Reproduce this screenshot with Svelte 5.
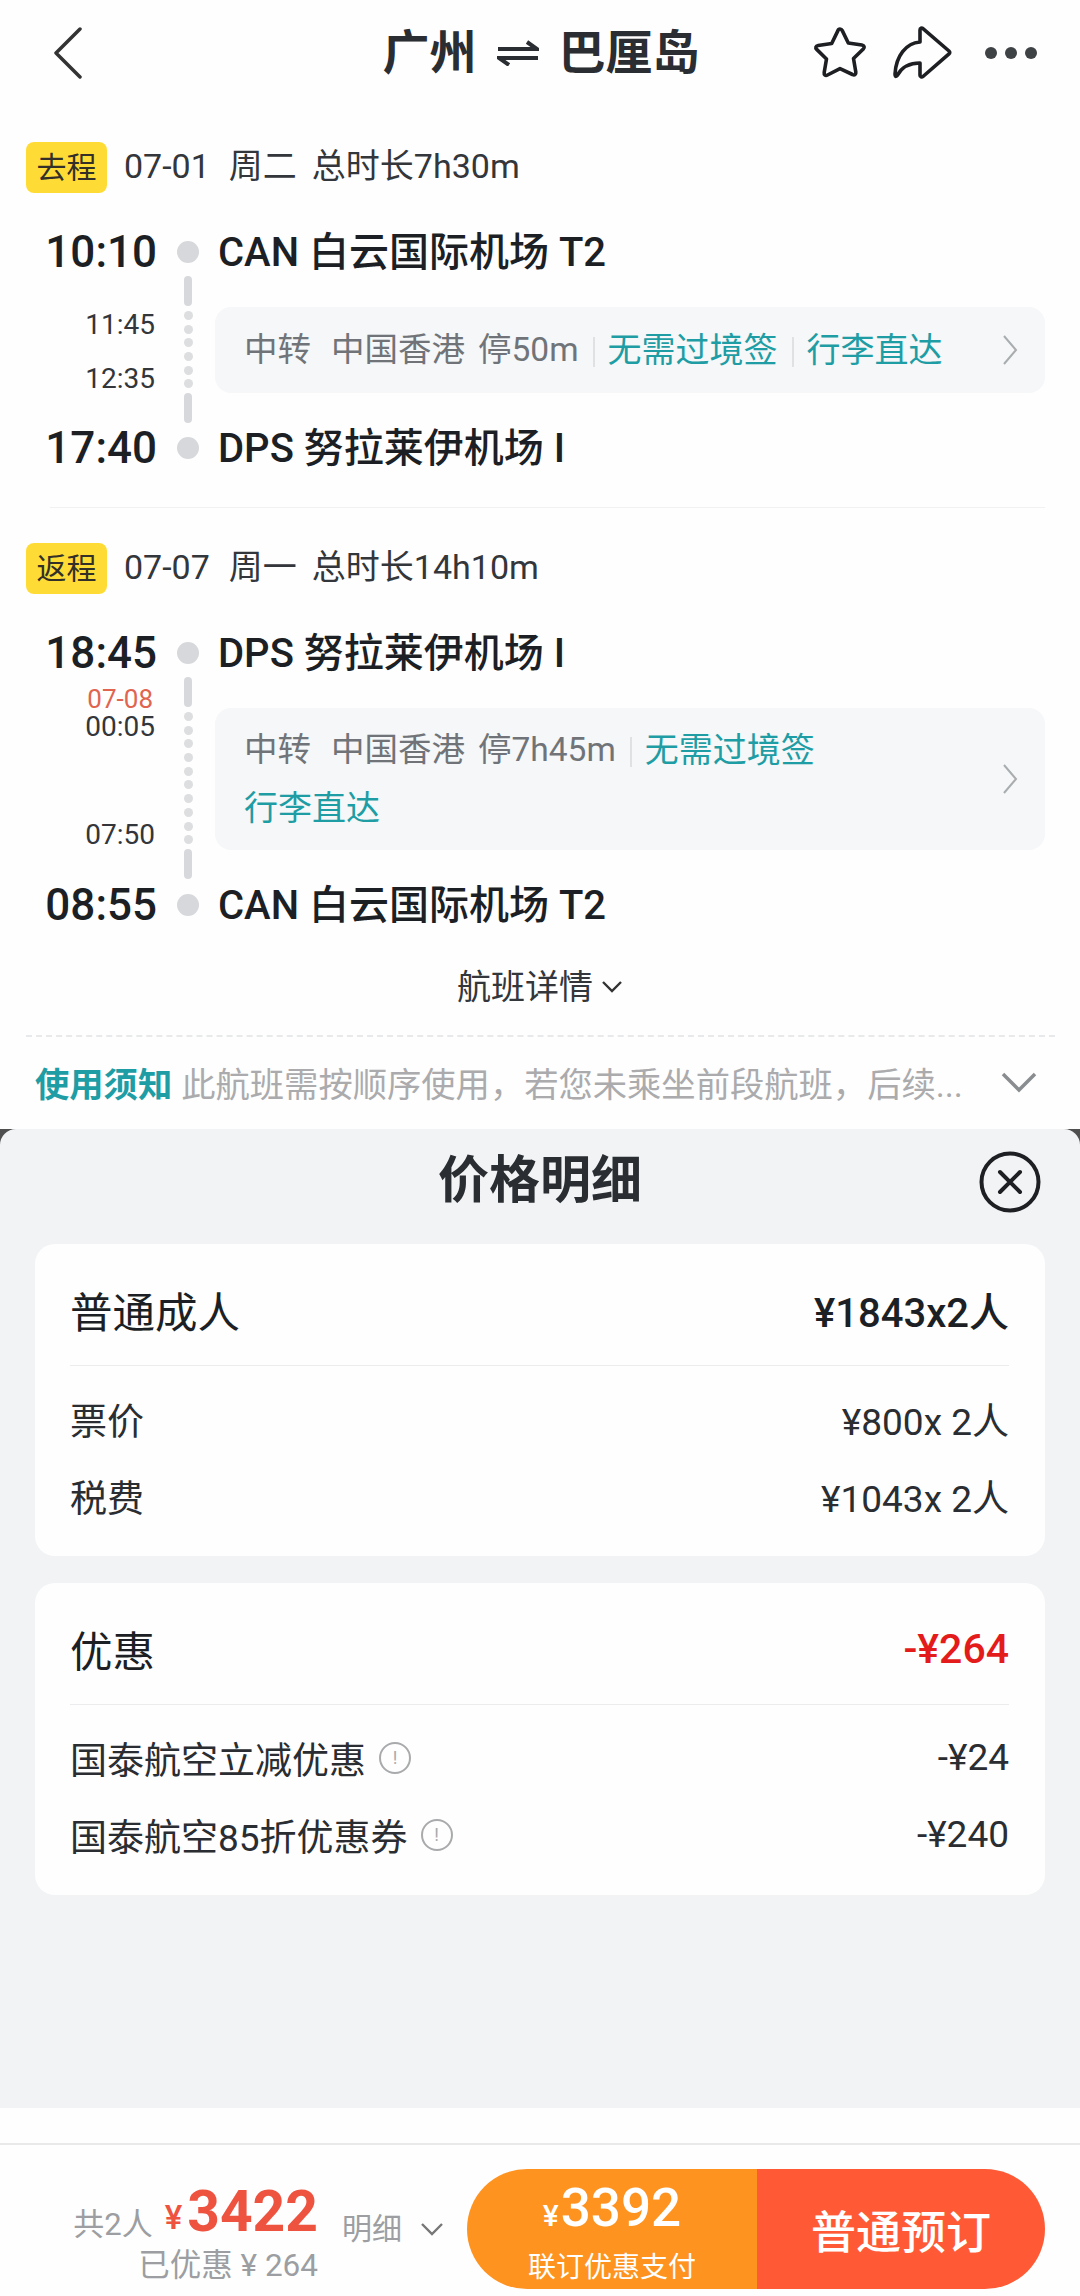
<script lang="ts">
  const trips = [
    {
      tag: '去程',
      date: '07-01',
      week: '周二',
      total: '总时长7h30m',
      from: { time: '10:10', place: 'CAN 白云国际机场 T2' },
      to: { time: '17:40', place: 'DPS 努拉莱伊机场 I' },
      arrive: '11:45',
      leave: '12:35',
      nextDay: '',
      stay: '停50m',
      dots: 6,
    },
    {
      tag: '返程',
      date: '07-07',
      week: '周一',
      total: '总时长14h10m',
      from: { time: '18:45', place: 'DPS 努拉莱伊机场 I' },
      to: { time: '08:55', place: 'CAN 白云国际机场 T2' },
      arrive: '00:05',
      leave: '07:50',
      nextDay: '07-08',
      stay: '停7h45m',
      dots: 10,
    },
  ];

  const fares = [
    { label: '票价', value: '¥800x 2人' },
    { label: '税费', value: '¥1043x 2人' },
  ];

  const discounts = [
    { label: '国泰航空立减优惠', value: '-¥24' },
    { label: '国泰航空85折优惠券', value: '-¥240' },
  ];
</script>

{#snippet stop(s: { time: string; place: string })}
  <div class="stop">
    <span class="stop-time">{s.time}</span>
    <span class="stop-dot"></span>
    <span class="stop-place">{s.place}</span>
  </div>
{/snippet}

<div class="page">
  <header class="topbar">
    <svg class="back" width="30" height="52" viewBox="0 0 30 52">
      <path d="M27 2 3 26l24 24" fill="none" stroke="#333" stroke-width="3.5" stroke-linecap="round" stroke-linejoin="round" />
    </svg>
    <h1 class="route">
      <span>广州</span>
      <svg width="42" height="26" viewBox="0 0 42 26">
        <path d="M1 9h39L30 2" fill="none" stroke="#2a2d31" stroke-width="4" />
        <path d="M41 18H2l10 7" fill="none" stroke="#2a2d31" stroke-width="4" />
      </svg>
      <span>巴厘岛</span>
    </h1>
    <div class="actions">
      <svg width="56" height="54" viewBox="0 0 56 54">
        <path d="M28 3c1 0 1.800.6 2.300 1.600l6 12.400 13.600 2c2.400.4 3 2.300 1.400 3.900l-9.800 9.600 2.300 13.500c.4 2.400-1.300 3.600-3.300 2.500L28 42.600 15.500 49c-2 1.100-3.700-.1-3.300-2.500l2.300-13.500-9.800-9.600c-1.600-1.600-1-3.500 1.400-3.900l13.600-2 6-12.400C26.200 3.600 27 3 28 3Z" fill="none" stroke="#1d1f22" stroke-width="3.600" stroke-linejoin="round" />
      </svg>
      <svg width="60" height="54" viewBox="0 0 60 54">
        <path d="M27 4c0-1.800 1.800-2.300 3-1.300l26 22.300c1 .9 1 2 0 2.900L30 50.500c-1.200 1-3 .5-3-1.300V37c-11 0-18 4-22.500 12C2.400 51.500 2 50 2 48 3 30 13 17 27 16Z" fill="none" stroke="#1d1f22" stroke-width="3.600" stroke-linejoin="round" />
      </svg>
      <div class="more"><i></i><i></i><i></i></div>
    </div>
  </header>

  <main class="itinerary">
    {#each trips as trip, i}
      {#if i > 0}<div class="trip-divider"></div>{/if}
      <section class="trip">
        <div class="trip-head">
          <span class="tag">{trip.tag}</span>
          <span class="date">{trip.date}</span>
          <span class="date week">{trip.week}</span>
          <span class="date">{trip.total}</span>
        </div>

        {@render stop(trip.from)}

        <div class="transfer">
          <div class="times" class:overnight={trip.nextDay}>
            {#if trip.nextDay}<span class="next-day">{trip.nextDay}</span>{/if}
            <span class="time">{trip.arrive}</span>
            <span class="time">{trip.leave}</span>
          </div>
          <div class="track">
            <span class="dash"></span>
            <div class="dots">
              {#each Array(trip.dots) as _}<i></i>{/each}
            </div>
            <span class="dash"></span>
          </div>
          <div class="transfer-box">
            <div class="transfer-info" class:wrapped={trip.nextDay}>
              <span class="muted">中转<b class="city">中国香港</b><b class="stay">{trip.stay}</b></span>
              <span class="perk">无需过境签</span>
              <span class="perk">行李直达</span>
            </div>
            <svg class="box-arrow" width="16" height="32" viewBox="0 0 16 32">
              <path d="M2 2l12 14L2 30" fill="none" stroke="#a9adb0" stroke-width="2" />
            </svg>
          </div>
        </div>

        {@render stop(trip.to)}
      </section>
    {/each}

    <div class="details-link">
      航班详情
      <svg width="22" height="14" viewBox="0 0 22 14">
        <path d="M2 2l9 9 9-9" fill="none" stroke="#333" stroke-width="2.400" />
      </svg>
    </div>

    <div class="notice">
      <span class="notice-title">使用须知</span>
      <span class="notice-text">此航班需按顺序使用，若您未乘坐前段航班，后续...</span>
      <svg width="36" height="22" viewBox="0 0 36 22">
        <path d="M2 3l16 16L34 3" fill="none" stroke="#8a8d90" stroke-width="3.500" />
      </svg>
    </div>
  </main>

  <div class="sheet-wrap">
    <section class="sheet">
      <div class="sheet-head">
        <h2>价格明细</h2>
        <svg class="close" width="62" height="62" viewBox="0 0 62 62">
          <circle cx="31" cy="31" r="28.500" fill="none" stroke="#1d1f22" stroke-width="4" />
          <path d="M21 21l20 20M41 21 21 41" fill="none" stroke="#1d1f22" stroke-width="4" stroke-linecap="round" />
        </svg>
      </div>

      <div class="card">
        <div class="card-head">
          <span>普通成人</span>
          <strong>¥1843x2人</strong>
        </div>
        {#each fares as row}
          <div class="card-row">
            <span>{row.label}</span>
            <span>{row.value}</span>
          </div>
        {/each}
      </div>

      <div class="card">
        <div class="card-head">
          <span>优惠</span>
          <strong class="red">-¥264</strong>
        </div>
        {#each discounts as row}
          <div class="card-row">
            <span class="with-info">
              {row.label}
              <span class="info">!</span>
            </span>
            <span>{row.value}</span>
          </div>
        {/each}
      </div>
    </section>
  </div>

  <footer class="footer">
    <div class="summary">
      <div class="price">
        <div class="price-main">
          <span class="people">共2人</span>
          <span class="yen">¥</span>
          <span class="amount">3422</span>
        </div>
        <div class="saved">已优惠 ¥ 264</div>
      </div>
      <div class="breakdown">
        明细
        <svg width="24" height="14" viewBox="0 0 24 14">
          <path d="M2 2l10 10L22 2" fill="none" stroke="#777" stroke-width="2.400" />
        </svg>
      </div>
    </div>
    <div class="buttons">
      <div class="btn-combo">
        <div class="combo-price"><small>¥</small>3392</div>
        <div class="combo-label">联订优惠支付</div>
      </div>
      <div class="btn-plain">普通预订</div>
    </div>
  </footer>
</div>

<style>
  :global(body) {
    margin: 0;
    background: #fefefe;
  }

  .page {
    width: 1080px;
    height: 2296px;
    display: flex;
    flex-direction: column;
    overflow: hidden;
    background: #fefefe;
    color: #1c1f24;
    font-family: Roboto, 'Noto Sans CJK SC', sans-serif;
  }

  .topbar {
    height: 106px;
    flex-shrink: 0;
    display: grid;
    grid-template-columns: 1fr auto 1fr;
    align-items: center;
    padding: 0 43px 0 53px;
  }

  .route {
    margin: 0 0 0 -8px;
    display: flex;
    align-items: center;
    gap: 20px;
    font-size: 47px;
    line-height: 60px;
    font-weight: 700;
    color: #2a2d31;
  }

  .actions {
    justify-self: end;
    display: flex;
    align-items: center;
    gap: 25px;
  }

  .more {
    display: flex;
    gap: 8px;
    margin-left: 7px;
  }

  .more i {
    width: 12px;
    height: 12px;
    border-radius: 50%;
    background: #3f4245;
  }

  .itinerary {
    height: 1023px;
    flex-shrink: 0;
    padding-top: 36px;
    box-sizing: border-box;
    display: flex;
    flex-direction: column;
  }

  .trip-divider {
    height: 1px;
    margin: 35px 35px 35px 50px;
    background: #f0f1f2;
  }

  .trip-head {
    display: flex;
    align-items: center;
    margin: 0 0 35px 26px;
    height: 51px;
    font-size: 34px;
    color: #33363a;
  }

  .tag {
    width: 81px;
    height: 51px;
    border-radius: 8px;
    margin-right: 17px;
    background: #ffdc35;
    color: #33302a;
    font-size: 30px;
    line-height: 51px;
    text-align: center;
  }

  .date {
    line-height: 49px;
    padding-bottom: 2px;
  }

  .week {
    margin: 0 15px 0 19px;
  }

  .stop {
    display: flex;
    align-items: center;
    height: 48px;
  }

  .stop-time {
    width: 157px;
    text-align: right;
    font-size: 44px;
    font-weight: 500;
    line-height: 48px;
    color: #1c1f24;
  }

  .stop-dot {
    width: 22px;
    height: 22px;
    margin: 0 19px 0 20px;
    border-radius: 50%;
    background: #d6d8db;
  }

  .stop-place {
    padding-top: 2px;
    font-size: 40px;
    line-height: 46px;
    font-weight: 500;
  }

  .transfer {
    display: flex;
  }

  .times {
    width: 155px;
    padding-top: 31px;
    display: flex;
    flex-direction: column;
    align-items: flex-end;
    font-size: 28px;
    color: #33363a;
  }

  .time {
    line-height: 36px;
  }

  .time + .time {
    margin-top: 18px;
  }

  .times.overnight {
    padding-top: 8px;
  }

  .times.overnight .time {
    line-height: 28px;
  }

  .times.overnight .time + .time {
    margin-top: 76px;
    line-height: 36px;
  }

  .next-day {
    font-size: 26px;
    line-height: 28px;
    padding-right: 2px;
    color: #e0644f;
  }

  .track {
    width: 8px;
    margin: 0 23px 0 29px;
    display: flex;
    flex-direction: column;
    align-items: center;
    gap: 5px;
  }

  .dash {
    width: 8px;
    height: 30px;
    border-radius: 4px;
    background: #d6d8db;
  }

  .dots {
    display: flex;
    flex-direction: column;
    gap: 4.700px;
  }

  .dots i {
    display: block;
    width: 9px;
    height: 9px;
    border-radius: 50%;
    background: #dcdee0;
  }

  .transfer-box {
    width: 830px;
    min-height: 86px;
    margin: 31px 0;
    padding: 13px 27px 13px 29px;
    box-sizing: border-box;
    display: flex;
    align-items: center;
    justify-content: space-between;
    border-radius: 16px;
    background: #f5f7f8;
  }

  .transfer-info {
    width: 710px;
    display: flex;
    flex-wrap: wrap;
    align-items: center;
    font-size: 33.500px;
    line-height: 58px;
  }

  .muted {
    color: #707478;
    white-space: nowrap;
  }

  .muted b {
    font-weight: 400;
  }

  .city {
    margin: 0 13px 0 20px;
  }

  .perk {
    color: #1e9da4;
    white-space: nowrap;
    font-size: 34px;
    line-height: 58px;
  }

  .perk::before {
    content: '';
    display: inline-block;
    width: 2px;
    height: 30px;
    margin: 0 13px 0 14px;
    vertical-align: -5px;
    background: #dfe1e3;
  }

  .wrapped .perk:last-child {
    flex-basis: 100%;
  }

  .wrapped .perk:last-child::before {
    display: none;
  }

  .details-link {
    margin-top: 38px;
    height: 40px;
    display: flex;
    align-items: center;
    justify-content: center;
    gap: 8px;
    font-size: 34px;
    line-height: 40px;
    color: #33363a;
  }

  .notice {
    margin: 28px 0 0 26px;
    width: 1029px;
    height: 92px;
    border-top: 2px dashed #e8e9ea;
    box-sizing: border-box;
    display: flex;
    align-items: center;
    padding: 0 18px 0 9px;
    font-size: 34.300px;
    white-space: nowrap;
  }

  .notice-title {
    color: #1e9da4;
    font-weight: 700;
    margin-right: 9px;
  }

  .notice-text {
    flex: 1;
    color: #ababad;
  }

  .sheet-wrap {
    height: 979px;
    flex-shrink: 0;
    background: #4f4f4f;
  }

  .sheet {
    height: 100%;
    padding: 0 35px;
    box-sizing: border-box;
    border-radius: 16px 16px 0 0;
    background: #f1f3f5;
  }

  .sheet-head {
    position: relative;
    height: 115px;
    display: flex;
    align-items: center;
    justify-content: center;
  }

  .sheet-head h2 {
    margin: 0 0 12px;
    font-size: 51px;
    line-height: 60px;
    font-weight: 700;
    color: #2a2d31;
  }

  .close {
    position: absolute;
    right: 4px;
    top: 22px;
  }

  .card {
    height: 312px;
    margin-bottom: 27px;
    padding: 0 36px 0 35px;
    box-sizing: border-box;
    border-radius: 20px;
    background: #fefefe;
  }

  .card-head {
    height: 122px;
    padding-top: 10px;
    box-sizing: border-box;
    margin-bottom: 14px;
    display: flex;
    align-items: center;
    justify-content: space-between;
    border-bottom: 1px solid #ececee;
    font-size: 42.500px;
    color: #1c1f24;
  }

  .card-head strong {
    font-size: 40px;
    font-weight: 500;
  }

  .card-head .red {
    font-size: 41px;
    color: #e31b1b;
  }

  .card-row {
    height: 77px;
    display: flex;
    align-items: center;
    justify-content: space-between;
    font-size: 37px;
    color: #2a2d31;
  }

  .with-info {
    display: flex;
    align-items: center;
    gap: 13px;
  }

  .info {
    width: 28px;
    height: 28px;
    border: 2px solid #a8aaac;
    border-radius: 50%;
    display: flex;
    align-items: center;
    justify-content: center;
    font-size: 18px;
    line-height: 1;
    color: #a8aaac;
  }

  .footer {
    flex: 1;
    margin-top: 35px;
    border-top: 2px solid #e8e9ea;
    padding: 24px 35px 0 0;
    display: flex;
    align-items: flex-start;
    justify-content: space-between;
  }

  .summary {
    display: flex;
    align-items: flex-start;
  }

  .price {
    width: 318px;
    display: flex;
    flex-direction: column;
    align-items: flex-end;
  }

  .price-main {
    display: flex;
    align-items: center;
    height: 70px;
    margin-top: 8px;
  }

  .people {
    font-size: 31px;
    color: #9c9ea2;
    margin: 18px 12px 0 0;
  }

  .yen {
    font-size: 33px;
    font-weight: 500;
    color: #ee5340;
    margin: 10px 5px 0 0;
  }

  .amount {
    font-size: 57px;
    font-weight: 700;
    color: #ee5340;
    line-height: 70px;
  }

  .saved {
    font-size: 31.500px;
    line-height: 38px;
    color: #9c9ea2;
  }

  .breakdown {
    margin: 41px 0 0 24px;
    display: flex;
    align-items: center;
    gap: 18px;
    font-size: 30px;
    line-height: 38px;
    color: #9c9ea2;
  }

  .buttons {
    width: 578px;
    height: 120px;
    display: flex;
    border-radius: 60px;
    overflow: hidden;
    color: #fff;
  }

  .btn-combo {
    width: 290px;
    background: #ff9320;
    display: flex;
    flex-direction: column;
    align-items: center;
  }

  .combo-price {
    margin-top: 7px;
    font-size: 53px;
    line-height: 64px;
    font-weight: 500;
  }

  .combo-price small {
    font-size: 30px;
    margin-right: 2px;
  }

  .combo-label {
    font-size: 28px;
    line-height: 36px;
    margin-top: 2px;
  }

  .btn-plain {
    flex: 1;
    background: #ff5a35;
    display: flex;
    align-items: center;
    justify-content: center;
    font-size: 45px;
    font-weight: 500;
  }
</style>
